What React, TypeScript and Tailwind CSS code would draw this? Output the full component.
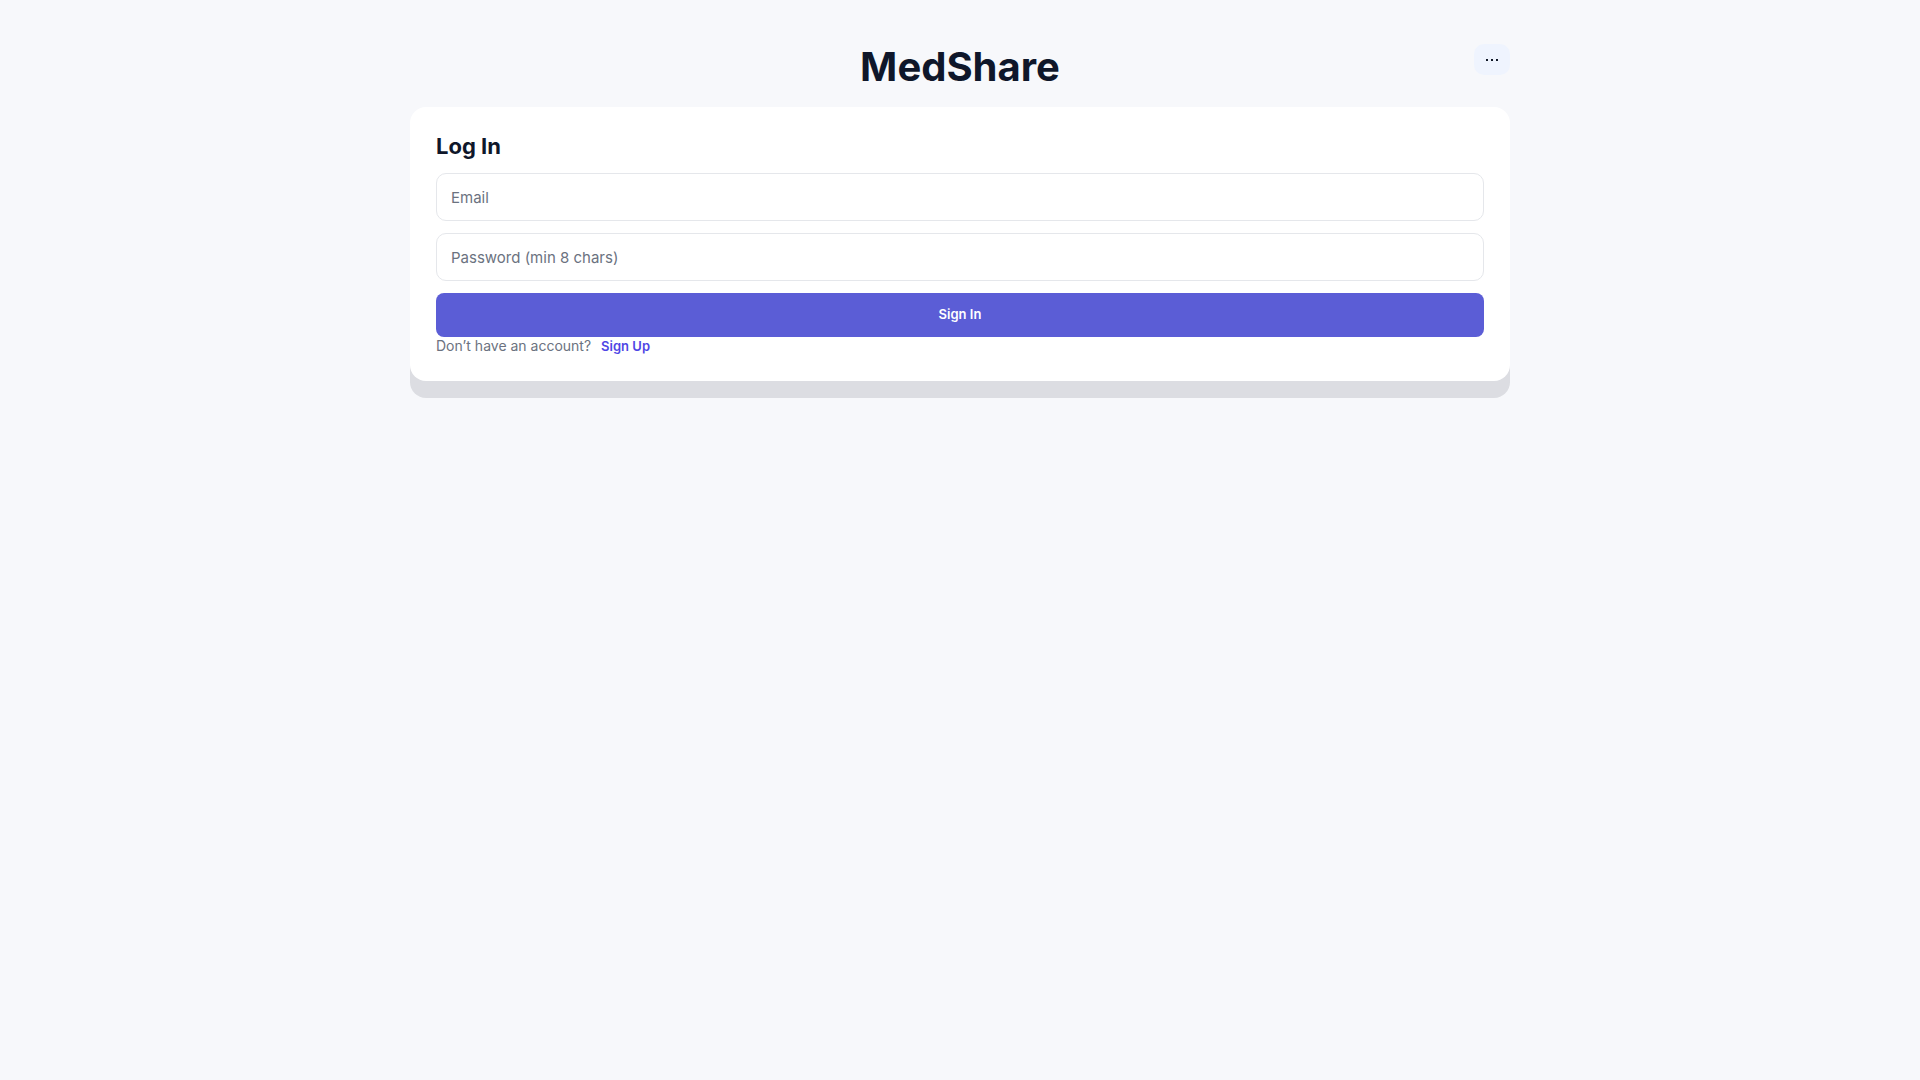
const App = () => {
    return (
        <div className="min-h-screen w-full bg-[#f7f8fb] font-['Inter',sans-serif]">
            <div className="mx-auto w-[1100px] pt-[43px]">
                <header className="relative mb-4 flex justify-center">
                    <h1 className="text-[40px] leading-[48px] font-bold text-[#0f172a]">MedShare</h1>
                    <button
                        type="button"
                        className="absolute right-0 top-px flex h-[31px] w-9 items-center justify-center gap-[3px] rounded-[10px] bg-[#eff4fe]"
                    >
                        <span className="h-[2px] w-[2px] bg-[#111827]" />
                        <span className="h-[2px] w-[2px] bg-[#111827]" />
                        <span className="h-[2px] w-[2px] bg-[#111827]" />
                    </button>
                </header>

                <div className="rounded-2xl bg-white px-[26px] pt-[25px] pb-[26px] shadow-[0_17px_0_0_#dcdde2]">
                    <h2 className="mb-[13px] text-[22px] leading-7 font-bold text-[#0f172a]">Log In</h2>
                    <form className="flex flex-col gap-3" onSubmit={(e) => e.preventDefault()}>
                        <input
                            type="email"
                            placeholder="Email"
                            className="h-12 w-full rounded-[10px] border border-[#e5e7eb] px-3.5 text-[15px] text-[#111827] placeholder:text-[#6b7280] outline-none"
                        />
                        <input
                            type="password"
                            placeholder="Password (min 8 chars)"
                            className="h-12 w-full rounded-[10px] border border-[#e5e7eb] px-3.5 text-[15px] text-[#111827] placeholder:text-[#6b7280] outline-none"
                        />
                        <button type="submit" className="h-11 w-full rounded-lg bg-[#5b5dd6] text-[13px] font-semibold text-white">
                            Sign In
                        </button>
                    </form>
                    <div className="text-sm leading-[18px] text-[#6b7280]">
                        Don’t have an account?
                        <a href="#" className="ml-[10px] text-[13px] font-semibold text-[#4f46e5]">
                            Sign Up
                        </a>
                    </div>
                </div>
            </div>
        </div>
    )
}

export default App
